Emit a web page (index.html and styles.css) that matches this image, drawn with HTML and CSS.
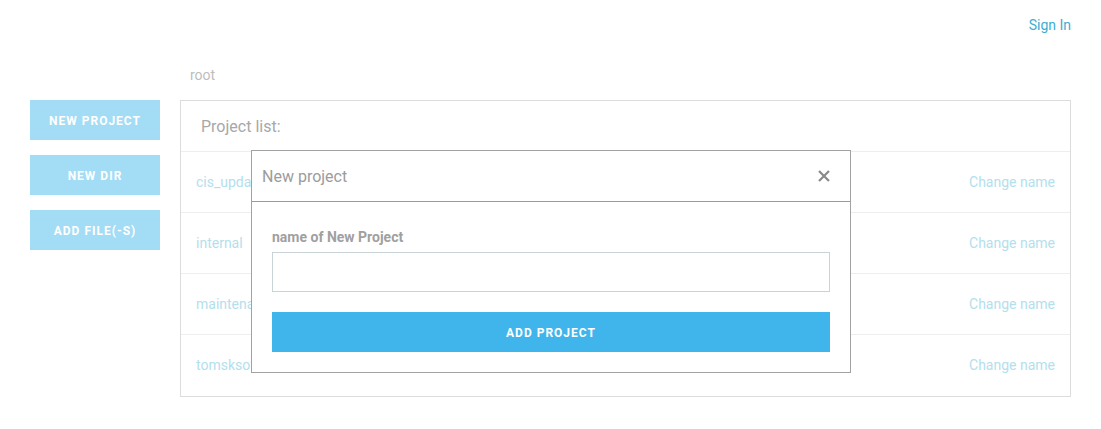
FILE: index.html
```html
<!DOCTYPE html>
<html>
<head>
<meta charset="utf-8">
<link rel="stylesheet" href="styles.css">
</head>
<body>
<header class="top">
  <a class="signin">Sign In</a>
</header>
<div class="layout">
  <aside class="sidebar">
    <button class="side-btn">NEW PROJECT</button>
    <button class="side-btn">NEW DIR</button>
    <button class="side-btn">ADD FILE(-S)</button>
  </aside>
  <main class="content">
    <div class="crumb">root</div>
    <section class="panel">
      <div class="panel-head">Project list:</div>
      <div class="row"><span class="pname">cis_update</span><span class="rename">Change name</span></div>
      <div class="row"><span class="pname">internal</span><span class="rename">Change name</span></div>
      <div class="row"><span class="pname">maintenance</span><span class="rename">Change name</span></div>
      <div class="row"><span class="pname">tomsksoft</span><span class="rename">Change name</span></div>
    </section>
  </main>
</div>
<div class="modal">
  <div class="modal-head">
    <span class="modal-title">New project</span>
    <svg class="close" width="14" height="14" viewBox="0 0 14 14"><path d="M2 2 L12 12 M12 2 L2 12" stroke="#8a8a8a" stroke-width="2.2" stroke-linecap="butt"/></svg>
  </div>
  <div class="modal-body">
    <label class="field-label">name of New Project</label>
    <input class="field" type="text">
    <button class="primary">ADD PROJECT</button>
  </div>
</div>
</body>
</html>
```
FILE: styles.css
```css
* { box-sizing: border-box; }
body {
  margin: 0;
  font-family: Roboto, "Liberation Sans", sans-serif;
  background: #fff;
  position: relative;
}
.top {
  height: 50px;
  display: flex;
  justify-content: flex-end;
  align-items: center;
  padding: 0 30px;
}
.signin {
  color: #3aaed3;
  font-size: 14px;
}
.layout {
  display: flex;
  gap: 20px;
  padding: 0 30px;
}
.sidebar {
  width: 130px;
  padding-top: 50px;
  display: flex;
  flex-direction: column;
  gap: 15px;
}
.side-btn {
  height: 40px;
  border: none;
  background: #a3dcf5;
  color: #fff;
  font-family: Roboto, "Liberation Sans", sans-serif;
  font-weight: 700;
  font-size: 12px;
  letter-spacing: 1px;
  padding: 1px 0 0;
}
.content { flex: 1; }
.crumb {
  height: 50px;
  line-height: 50px;
  padding-left: 10px;
  color: #bdbdbd;
  font-size: 14px;
}
.panel {
  border: 1px solid #dcdcdc;
  padding-bottom: 1px;
}
.panel-head {
  height: 50px;
  display: flex;
  align-items: center;
  padding-left: 20px;
  font-size: 16px;
  color: #a8a8a8;
}
.row {
  height: 61px;
  border-top: 1px solid #eeeeee;
  display: flex;
  align-items: center;
  justify-content: space-between;
  padding: 0 15px;
  font-size: 14px;
  color: #b3e0ec;
}
.modal {
  position: absolute;
  left: 251px;
  top: 150px;
  width: 600px;
  height: 223px;
  border: 1px solid #a2a2a2;
  background: #fff;
}
.modal-head {
  height: 51px;
  border-bottom: 1px solid #9a9a9a;
  display: flex;
  align-items: center;
  justify-content: space-between;
  padding: 0 19px 0 10px;
}
.modal-title {
  font-size: 16px;
  color: #9c9c9c;
}
.modal-body {
  padding: 26px 20px 20px;
  display: flex;
  flex-direction: column;
}
.field-label {
  height: 18px;
  line-height: 18px;
  font-size: 14px;
  font-weight: 700;
  color: #a0a0a0;
  margin-bottom: 6px;
}
.field {
  height: 40px;
  border: 1px solid #c8d4d8;
  margin: 0 0 20px;
}
.primary {
  height: 40px;
  border: none;
  background: #40b5eb;
  color: #fff;
  font-family: Roboto, "Liberation Sans", sans-serif;
  font-weight: 700;
  font-size: 12px;
  letter-spacing: 1px;
  padding: 1px 0 0;
}
```
